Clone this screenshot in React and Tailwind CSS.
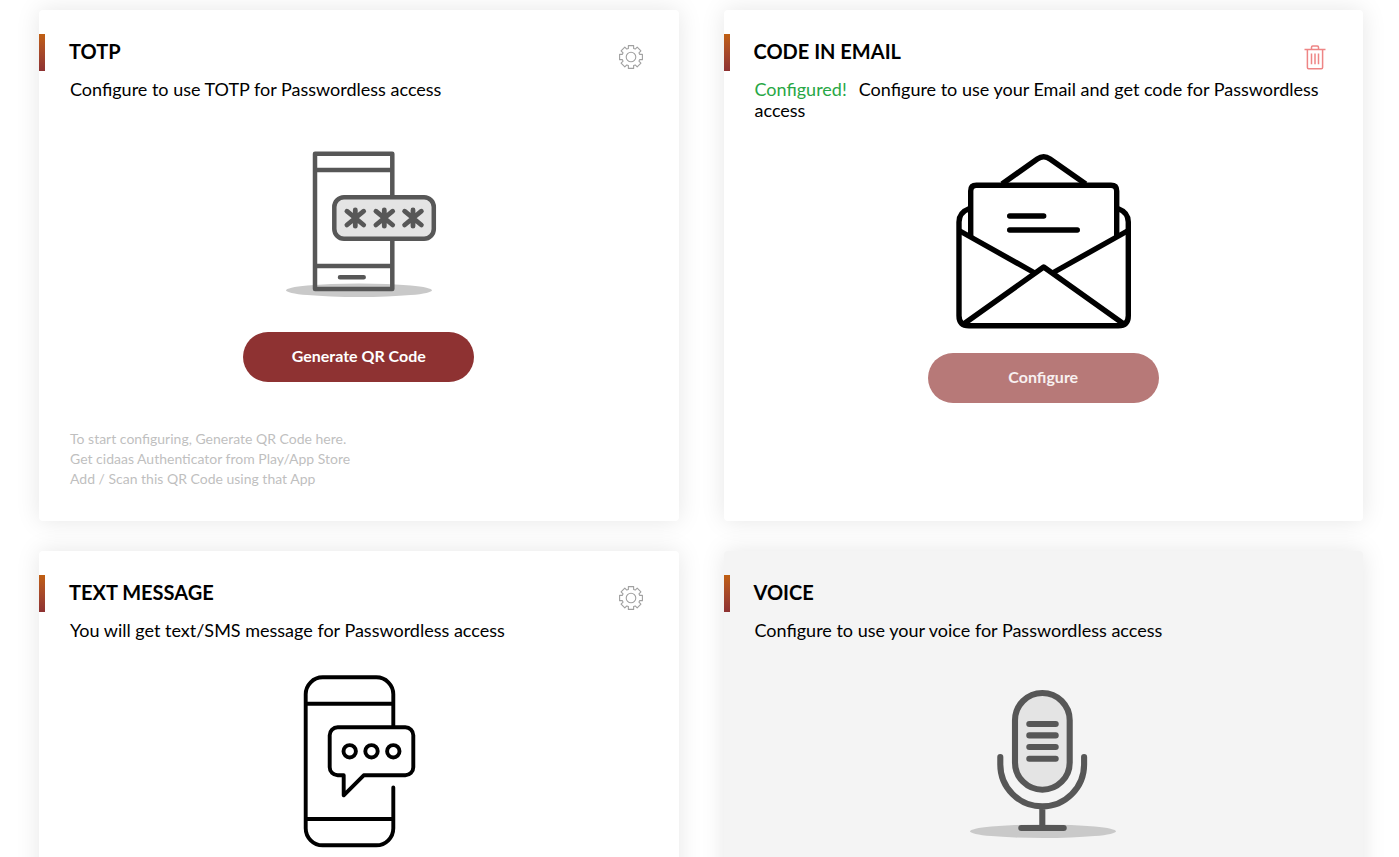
import React from "react";

function gearPath() {
  const points = [];
  for (let tooth = 0; tooth < 8; tooth++) {
    const middle = tooth * 45 - 90;
    for (const [offset, radius] of [[-17, 9], [-13, 11.7], [13, 11.7], [17, 9]]) {
      const angle = ((middle + offset) * Math.PI) / 180;
      points.push(`${(13 + radius * Math.cos(angle)).toFixed(2)} ${(13 + radius * Math.sin(angle)).toFixed(2)}`);
    }
  }
  return `M${points.join("L")}Z`;
}

const GEAR = gearPath();

function GearIcon() {
  return (
    <svg width="26" height="26" viewBox="0 0 26 26" fill="none" stroke="#a0a0a0" strokeWidth="1.1" strokeLinejoin="round" aria-hidden="true">
      <path d={GEAR} />
      <circle cx="13" cy="13" r="4.8" />
    </svg>
  );
}

function TrashIcon() {
  return (
    <svg width="26" height="26" viewBox="0 0 26 26" fill="none" stroke="#ee8585" strokeWidth="1.5" aria-hidden="true">
      <path d="M2.5 5.5h21M9.5 5.5V3.2q0-1.2 1.2-1.2h4.6q1.2 0 1.2 1.2v2.3" />
      <path d="M5.4 5.5v18q0 1.2 1.2 1.2h12.8q1.2 0 1.2-1.2v-18M9.5 9.5v10.7M13 9.5v10.7M16.5 9.5v10.7" />
    </svg>
  );
}

function TotpArt() {
  return (
    <svg width="200" height="192" viewBox="0 0 200 192" fill="none" stroke="#575757" strokeWidth="4.5" strokeLinecap="round" strokeLinejoin="round" aria-hidden="true">
      <ellipse cx="100" cy="170.3" rx="73" ry="6.8" fill="#c9c9c9" stroke="none" />
      <path d="M56 33.7h77.3V169H56ZM56 50h77.3M56 146h77.3M81 157.3h23.7" />
      <rect x="75.3" y="77.2" width="99.5" height="41.6" rx="9.7" fill="#e4e4e4" />
      {[96.3, 125.3, 154].map((x) => (
        <path key={x} strokeWidth="4.8" d={`M${x} 90v16.2M${x - 8.4} 91.2l16.8 13.8M${x + 8.4} 91.2l-16.8 13.8`} />
      ))}
    </svg>
  );
}

function EmailArt() {
  return (
    <svg width="200" height="192" viewBox="0 0 200 192" fill="none" stroke="#000" strokeWidth="5.4" aria-hidden="true">
      <path d="M59 43 94.3 18Q100.7 13.5 107 18L142.7 43" />
      <path d="M27.7 96.7V50q0-5.7 5.7-5.7h134.6q5.7 0 5.7 5.7v46.7" />
      <path d="M26 67.7Q16 71.5 16 81v93.7q0 10 10 10h149.3q10 0 10-10V81q0-9.5-10-13.3" />
      <path d="M16 89.5 91.8 132M185.3 89.5 109.5 132" />
      <path d="M21 182.8 100.7 126l79.7 56.8" strokeLinejoin="round" />
      <path d="M66.7 75h34M66.7 89h67.6" strokeLinecap="round" />
    </svg>
  );
}

function MessageArt() {
  return (
    <svg width="200" height="192" viewBox="0 0 200 192" fill="none" stroke="#000" strokeWidth="3.9" strokeLinejoin="round" aria-hidden="true">
      <path d="M134.3 65V33.3a17 17 0 0 0-17-17H63.7a17 17 0 0 0-17 17v134a17 17 0 0 0 17 17h53.6a17 17 0 0 0 17-17V126.5" strokeLinecap="round" />
      <path d="M46.7 42.7h87.6M46.7 158h87.6" />
      <path d="M78.7 66.3h67.6a8 8 0 0 1 8 8v32a8 8 0 0 1-8 8h-41.6l-20 20v-20h-6a8 8 0 0 1-8-8v-32a8 8 0 0 1 8-8Z" />
      <circle cx="90.7" cy="90.3" r="6.2" />
      <circle cx="112.5" cy="90.3" r="6.2" />
      <circle cx="134.3" cy="90.3" r="6.2" />
    </svg>
  );
}

function VoiceArt() {
  return (
    <svg width="200" height="192" viewBox="0 0 200 192" fill="none" stroke="#575757" strokeWidth="6.1" strokeLinecap="round" aria-hidden="true">
      <ellipse cx="100" cy="170.3" rx="73" ry="6.8" fill="#c9c9c9" stroke="none" />
      <rect x="72" y="32" width="54.7" height="96.7" rx="27.3" fill="#e4e4e4" />
      <path d="M86.3 63h26.4M86.3 74.4h26.4M86.3 86h26.4M86.3 97.7h26.4" />
      <path d="M57.3 96v7.5a41.9 41.9 0 0 0 83.8 0V96M99.3 145.3V167M78.3 167h42.4" />
    </svg>
  );
}

function MethodCard({ title, configured, description, action, art, button, disabled, inactive, children }) {
  return (
    <section className={`flex min-h-[511px] flex-col rounded pt-6 shadow-[0_0_25px_rgba(0,0,0,0.1)] ${inactive ? "bg-[#f4f4f4]" : "bg-white"}`}>
      <header className="flex h-[37px] items-center pr-[35px]">
        <span className="h-full w-[6px] bg-gradient-to-b from-[#c05f10] to-[#8e3232]" />
        <h2 className="grow pb-1 pl-6 text-[20px] leading-6 font-bold">{title}</h2>
        {action && (
          <button type="button" aria-label={action === "delete" ? "Delete" : "Settings"} className="pt-2">
            {action === "delete" ? <TrashIcon /> : <GearIcon />}
          </button>
        )}
      </header>
      <p className="mt-2 px-[31px] text-[18px] leading-[21px]">
        {configured && <span className="mr-3 text-[#28a745]">Configured!</span>}
        <span>{description}</span>
      </p>
      <div className="mt-5 flex flex-col items-center gap-5">
        {art}
        {button && (
          <button type="button" disabled={disabled} className={`h-[50px] w-[231px] rounded-full pb-0.5 text-[16px] font-bold ${disabled ? "bg-[#b77978] text-[#f8f0f0]" : "bg-[#8e3232] text-white"}`}>
            {button}
          </button>
        )}
      </div>
      {children}
    </section>
  );
}

export default function App() {
  return (
    <main className="grid grid-cols-2 gap-x-[45px] gap-y-[30px] bg-white pt-[10px] pr-9 pb-[30px] pl-[39px] font-['Lato',sans-serif] text-black">
      <MethodCard
        title="TOTP"
        description="Configure to use TOTP for Passwordless access"
        action="settings"
        art={<TotpArt />}
        button="Generate QR Code"
      >
        <div className="mt-[47px] px-[31px] text-[14px] leading-[20px] text-[#bfbfbf]">
          <p>To start configuring, Generate QR Code here.</p>
          <p>Get cidaas Authenticator from Play/App Store</p>
          <p>Add / Scan this QR Code using that App</p>
        </div>
      </MethodCard>
      <MethodCard
        title="CODE IN EMAIL"
        configured
        description="Configure to use your Email and get code for Passwordless access"
        action="delete"
        art={<EmailArt />}
        button="Configure"
        disabled
      />
      <MethodCard
        title="TEXT MESSAGE"
        description="You will get text/SMS message for Passwordless access"
        action="settings"
        art={<MessageArt />}
      />
      <MethodCard
        title="VOICE"
        description="Configure to use your voice for Passwordless access"
        art={<VoiceArt />}
        inactive
      />
    </main>
  );
}
